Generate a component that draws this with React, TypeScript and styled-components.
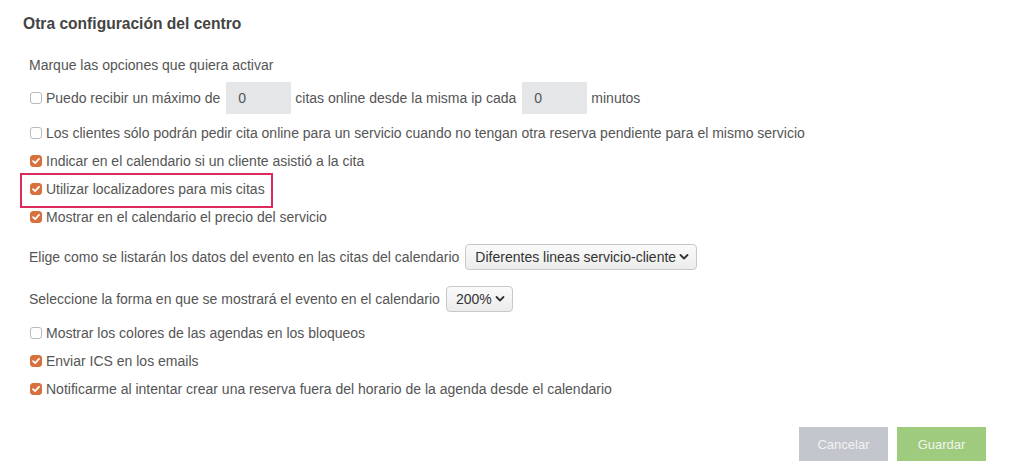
import styled, { createGlobalStyle } from "styled-components";

const GlobalStyle = createGlobalStyle`
  body {
    margin: 0;
    background: #fff;
    font-family: "Liberation Sans", Arial, sans-serif;
    color: #555;
  }
`;

const options = {
  first: [
    { text: "Los clientes sólo podrán pedir cita online para un servicio cuando no tengan otra reserva pendiente para el mismo servicio", checked: false },
    { text: "Indicar en el calendario si un cliente asistió a la cita", checked: true },
    { text: "Utilizar localizadores para mis citas", checked: true, highlight: true },
    { text: "Mostrar en el calendario el precio del servicio", checked: true },
  ],
  last: [
    { text: "Mostrar los colores de las agendas en los bloqueos", checked: false },
    { text: "Enviar ICS en los emails", checked: true },
    { text: "Notificarme al intentar crear una reserva fuera del horario de la agenda desde el calendario", checked: true },
  ],
};

const Check = ({ checked }: { checked: boolean }) => (
  <Box $checked={checked}>
    {checked && (
      <svg width="10" height="10" viewBox="0 0 10 10">
        <path d="M2 5.2 L4.1 7.2 L8 2.8" fill="none" stroke="#fff" strokeWidth="1.8" strokeLinecap="round" strokeLinejoin="round" />
      </svg>
    )}
  </Box>
);

const Chevron = () => (
  <svg width="10" height="8" viewBox="0 0 10 8">
    <path d="M1.5 2 L5 5.5 L8.5 2" fill="none" stroke="#333" strokeWidth="1.8" strokeLinecap="round" strokeLinejoin="round" />
  </svg>
);

const App = () => {
  return (
    <Page>
      <GlobalStyle />
      <Title>Otra configuración del centro</Title>
      <Body>
        <Intro>Marque las opciones que quiera activar</Intro>
        <InputRow>
          <Check checked={false} />
          Puedo recibir un máximo de
          <NumberBox>0</NumberBox>
          citas online desde la misma ip cada
          <NumberBox>0</NumberBox>
          minutos
        </InputRow>
        {options.first.map((o) => (
          <Row key={o.text} $highlight={o.highlight}>
            <Check checked={o.checked} />
            {o.text}
          </Row>
        ))}
        <SelectRow $top={12}>
          Elige como se listarán los datos del evento en las citas del calendario
          <Select>
            Diferentes lineas servicio-cliente
            <Chevron />
          </Select>
        </SelectRow>
        <SelectRow $top={14}>
          Seleccione la forma en que se mostrará el evento en el calendario
          <Select>
            200%
            <Chevron />
          </Select>
        </SelectRow>
        <Spacer />
        {options.last.map((o) => (
          <Row key={o.text}>
            <Check checked={o.checked} />
            {o.text}
          </Row>
        ))}
      </Body>
      <Actions>
        <Button $color="#c3c6cc">Cancelar</Button>
        <Button $color="#9ecb7e">Guardar</Button>
      </Actions>
    </Page>
  );
};
export default App;

const Page = styled.div`
  width: 1024px;
  height: 471px;
  padding: 14px 0 0 23px;
  box-sizing: border-box;
`;

const Title = styled.h2`
  margin: 0;
  font-size: 15.6px;
  line-height: 20px;
  font-weight: bold;
  color: #444;
`;

const Body = styled.div`
  padding-left: 6px;
  font-size: 14px;
`;

const Intro = styled.p`
  margin: 21px 0 0;
  line-height: 20px;
`;

const InputRow = styled.div`
  display: flex;
  align-items: center;
  gap: 4px;
  height: 32px;
  margin-top: 7px;
  margin-bottom: 5px;
  white-space: nowrap;
`;

const NumberBox = styled.span`
  display: inline-flex;
  align-items: center;
  width: 65px;
  height: 32px;
  padding-left: 12px;
  margin: 0 0 0 2px;
  box-sizing: border-box;
  background: #e4e6e8;
  color: #555;
`;

const Row = styled.div<{ $highlight?: boolean }>`
  position: relative;
  display: flex;
  align-items: center;
  gap: 4px;
  height: 28px;
  white-space: nowrap;
  width: max-content;
  ${(p) =>
    p.$highlight &&
    `
    &::after {
      content: "";
      position: absolute;
      left: -9px;
      right: -8px;
      top: -2px;
      bottom: -5px;
      border: 2px solid #dc2a5b;
    }
  `}
`;

const Box = styled.span<{ $checked: boolean }>`
  display: inline-flex;
  align-items: center;
  justify-content: center;
  width: 12px;
  height: 12px;
  margin: 0 0 0 1px;
  border-radius: 3px;
  box-sizing: border-box;
  background: ${(p) => (p.$checked ? "#d6703d" : "#fff")};
  border: 1px solid ${(p) => (p.$checked ? "#d6703d" : "#b9b9b9")};
`;

const SelectRow = styled.div<{ $top: number }>`
  display: flex;
  align-items: center;
  gap: 6px;
  height: 28px;
  margin-top: ${(p) => p.$top}px;
  white-space: nowrap;
`;

const Select = styled.span`
  display: inline-flex;
  align-items: center;
  gap: 3px;
  height: 26px;
  padding: 0 7px 0 9px;
  box-sizing: border-box;
  border: 1px solid #c8c8c8;
  border-radius: 4px;
  background: linear-gradient(#fafafa, #ececec);
  color: #333;
`;

const Spacer = styled.div`
  height: 6px;
`;

const Actions = styled.div`
  display: flex;
  justify-content: flex-end;
  gap: 9px;
  margin-top: 24px;
  padding-right: 38px;
`;

const Button = styled.button<{ $color: string }>`
  width: 89px;
  height: 34px;
  border: none;
  background: ${(p) => p.$color};
  color: #f2f4f0;
  font-family: "Liberation Sans", Arial, sans-serif;
  font-size: 13px;
`;
